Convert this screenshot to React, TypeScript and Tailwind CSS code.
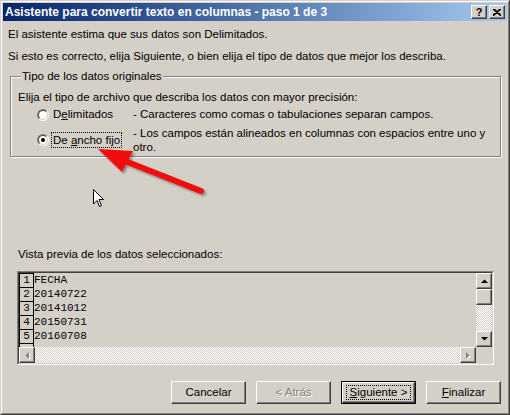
import type { ReactNode } from "react";

const rows = ["FECHA", "20140722", "20141012", "20150731", "20160708"];

const raised =
  "border border-t-white border-l-white border-r-[#404040] border-b-[#404040] shadow-[inset_-1px_-1px_0_#808080]";

function Tri({ dir, muted }: { dir: "up" | "down" | "left" | "right"; muted?: boolean }) {
  const pts = {
    up: "0,4 3.5,0.5 7,4",
    down: "0,0 7,0 3.5,3.5",
    left: "4,0 4,7 0.5,3.5",
    right: "0,0 0,7 3.5,3.5",
  }[dir];
  const wide = dir === "up" || dir === "down";
  return (
    <svg width={wide ? 7 : 4} height={wide ? 4 : 7} className={muted ? "drop-shadow-[1px_1px_0_#fff]" : ""}>
      <polygon points={pts} fill={muted ? "#808080" : "#000"} />
    </svg>
  );
}

function ScrollBtn({ children }: { children: ReactNode }) {
  return (
    <div className={`w-[16px] h-[16px] shrink-0 bg-[#d4d0c8] flex items-center justify-center ${raised}`}>
      {children}
    </div>
  );
}

function Radio({ checked }: { checked?: boolean }) {
  return (
    <div className="w-[12px] h-[12px] shrink-0 rounded-full border border-t-[#808080] border-l-[#808080] border-r-white border-b-white">
      <div className="w-full h-full rounded-full bg-white border border-t-[#404040] border-l-[#404040] border-r-[#d4d0c8] border-b-[#d4d0c8] flex items-center justify-center">
        {checked && <div className="w-[4px] h-[4px] rounded-full bg-black" />}
      </div>
    </div>
  );
}

function Button({ children, primary, disabled }: { children: ReactNode; primary?: boolean; disabled?: boolean }) {
  return (
    <div className={`w-[75px] h-[23px] ${primary ? "border border-black" : ""}`}>
      <div
        className={`w-full h-full bg-[#d4d0c8] flex items-center justify-center ${raised} ${
          disabled ? "text-[#808080] [text-shadow:1px_1px_0_#fff]" : "text-black"
        }`}
      >
        {primary ? <span className="border border-dotted border-black px-[3px] leading-[13px]">{children}</span> : children}
      </div>
    </div>
  );
}

export default function App() {
  return (
    <div className="relative w-[510px] h-[415px] bg-[#d4d0c8] font-['Liberation_Sans',Arial,sans-serif] text-[11.5px] leading-[13px] text-black select-none border border-t-[#d4d0c8] border-l-[#d4d0c8] border-r-[#404040] border-b-[#404040]">
      <div className="h-full border border-t-white border-l-white border-r-[#808080] border-b-[#808080] p-[1px] flex flex-col">
        {/* Title bar */}
        <div className="h-[18px] bg-linear-to-r from-[#0a246a] to-[#a6caf0] flex items-center justify-between pl-[2px] pr-[2px]">
          <span className="text-white font-bold text-[12px]">Asistente para convertir texto en columnas - paso 1 de 3</span>
          <div className="flex gap-[2px]">
            <div className={`w-[16px] h-[14px] bg-[#d4d0c8] flex items-center justify-center font-bold text-[11px] ${raised}`}>?</div>
            <div className={`w-[16px] h-[14px] bg-[#d4d0c8] flex items-center justify-center ${raised}`}>
              <svg width="8" height="7">
                <path d="M0 0 L8 7 M8 0 L0 7 M1 0 L8 6 M7 0 L0 6" stroke="#000" strokeWidth="1.2" />
              </svg>
            </div>
          </div>
        </div>

        <p className="mt-[7px] pl-[5px]">El asistente estima que sus datos son Delimitados.</p>
        <p className="mt-[9px] pl-[5px]">
          Si esto es correcto, elija Siguiente, o bien elija el tipo de datos que mejor los describa.
        </p>

        {/* Tipo de los datos originales */}
        <fieldset className="mt-[7px] ml-[7px] mr-[6px] border border-[#808080] shadow-[inset_1px_1px_0_#fff,1px_1px_0_#fff] pl-[7px] pt-[8px] pb-[2px]">
          <legend className="ml-[3px] px-[1px] bg-[#d4d0c8]">Tipo de los datos originales</legend>
          <p>Elija el tipo de archivo que describa los datos con mayor precisión:</p>
          <div className="mt-[4px] ml-[19px] flex items-center gap-[2px]">
            <Radio />
            <span className="w-[80px] px-[2px]">
              D<u>e</u>limitados
            </span>
            <span>- Caracteres como comas o tabulaciones separan campos.</span>
          </div>
          <div className="mt-[5px] ml-[19px] flex items-center gap-[2px]">
            <Radio checked />
            <span className="w-[80px]">
              <span className="inline-block border border-dotted border-black px-[1px] leading-[14px]">
                De <u>a</u>ncho fijo
              </span>
            </span>
            <span className="leading-[14px] w-[362px]">
              - Los campos están alineados en columnas con espacios entre uno y otro.
            </span>
          </div>
        </fieldset>

        <p className="mt-[91px] pl-[15px]">Vista previa de los datos seleccionados:</p>

        {/* Preview */}
        <div className="mt-[10px] ml-[14px] w-[477px] border border-t-[#808080] border-l-[#808080] border-r-white border-b-white">
          <div className="border border-t-[#404040] border-l-[#404040] border-r-[#d4d0c8] border-b-[#d4d0c8]">
            <div className="flex h-[74px]">
              <div className="flex-1 overflow-hidden font-['Liberation_Mono',monospace] text-[11px]">
                {rows.map((r, i) => (
                  <div key={r} className="flex h-[14px] leading-[14px]">
                    <div className="w-[15px] shrink-0 border border-black -mb-[1px] text-center leading-[12px]">{i + 1}</div>
                    <span>{r}</span>
                  </div>
                ))}
                <div className="w-[15px] h-[5px] border border-black" />
              </div>
              <div className="w-[16px] flex flex-col">
                <ScrollBtn>
                  <Tri dir="up" />
                </ScrollBtn>
                <ScrollBtn>{null}</ScrollBtn>
                <div className="flex-1 bg-[repeating-conic-gradient(#fff_0_25%,#d4d0c8_0_50%)] bg-[length:2px_2px]" />
                <ScrollBtn>
                  <Tri dir="down" />
                </ScrollBtn>
              </div>
            </div>
            <div className="flex h-[16px]">
              <ScrollBtn>
                <Tri dir="left" muted />
              </ScrollBtn>
              <div className="flex-1 bg-[repeating-conic-gradient(#fff_0_25%,#d4d0c8_0_50%)] bg-[length:2px_2px]" />
              <ScrollBtn>
                <Tri dir="right" muted />
              </ScrollBtn>
              <div className="w-[16px] bg-[#d4d0c8]" />
            </div>
          </div>
        </div>

        {/* Buttons */}
        <div className="mt-[16px] pr-[6px] flex justify-end gap-[10px]">
          <Button>Cancelar</Button>
          <Button disabled>&lt; Atrás</Button>
          <Button primary>
            <u>S</u>iguiente &gt;
          </Button>
          <Button>
            <u>F</u>inalizar
          </Button>
        </div>
      </div>

      {/* Red annotation arrow */}
      <svg className="absolute left-0 top-0 pointer-events-none" width="510" height="415">
        <defs>
          <filter id="sh" x="-10%" y="-10%" width="130%" height="140%">
            <feDropShadow dx="2" dy="2" stdDeviation="1.2" floodColor="#000" floodOpacity="0.35" />
          </filter>
        </defs>
        <g filter="url(#sh)" fill="#f01010">
          <line x1="200" y1="190" x2="124" y2="160" stroke="#f01010" strokeWidth="6" strokeLinecap="round" />
          <polygon points="97,148 132,150 121,171" />
        </g>
      </svg>

      {/* Mouse cursor */}
      <svg className="absolute left-[91px] top-[187px] pointer-events-none" width="13" height="20">
        <path d="M1.5 1.5 L1.5 16 L5 12.5 L7.5 18.5 L9.5 17.5 L7 11.5 L11.5 11.5 Z" fill="#fff" stroke="#000" strokeWidth="1" />
      </svg>
    </div>
  );
}
